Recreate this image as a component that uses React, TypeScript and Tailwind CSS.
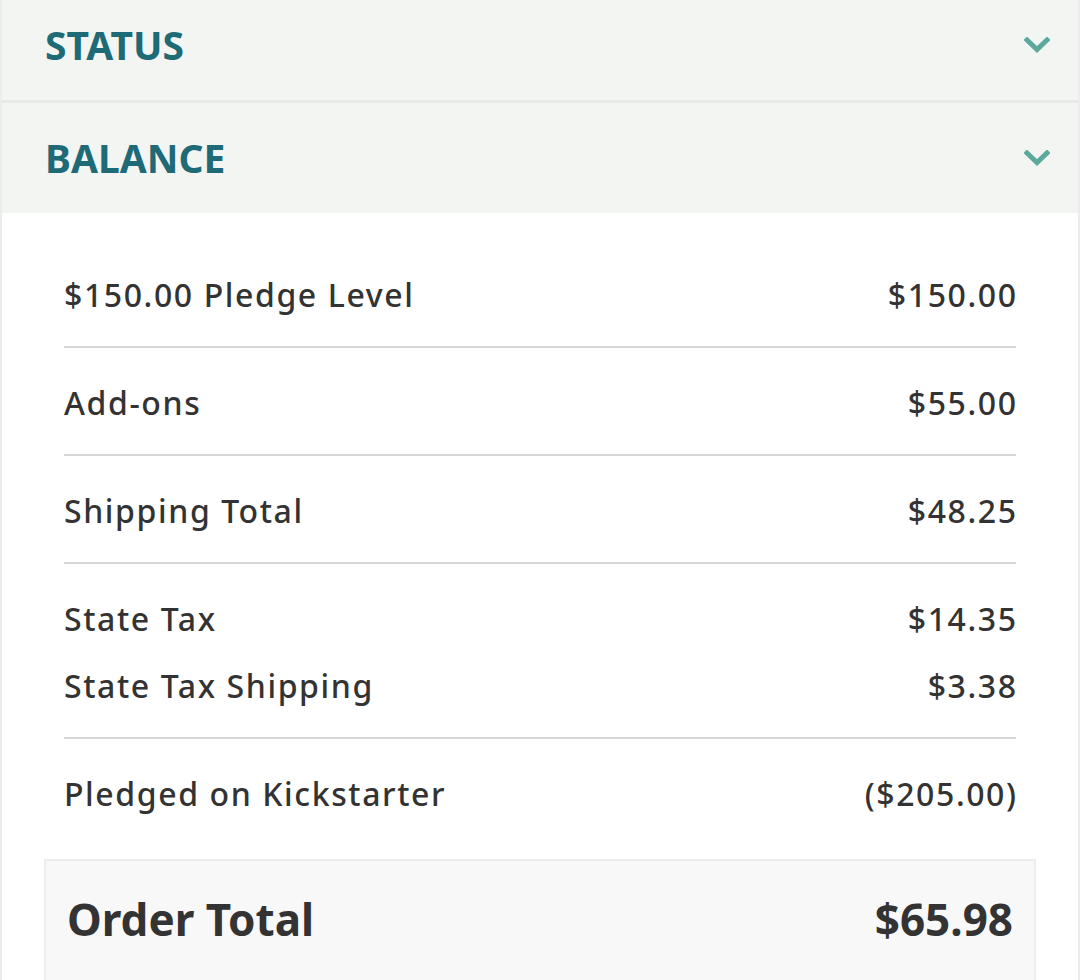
import { ReactNode } from 'react'

function Chevron() {
  return (
    <svg width="26" height="16" viewBox="0 0 26 16" fill="none">
      <path d="M3 3l10 9.5L23 3" stroke="#5aa99b" strokeWidth="5" strokeLinecap="square" />
    </svg>
  )
}

function Section({ title, className = '' }: { title: string; className?: string }) {
  return (
    <div className={`flex items-center justify-between bg-[#f3f5f3] pl-[43px] pr-[28px] ${className}`}>
      <span className="text-[39px] font-bold text-[#1e6a76]">{title}</span>
      <Chevron />
    </div>
  )
}

function Row({ label, value }: { label: string; value: string }) {
  return (
    <div className="flex h-[67px] items-center justify-between text-[32px] font-medium tracking-[1.6px] text-[#333]">
      <span>{label}</span>
      <span className="-mr-[1.6px]">{value}</span>
    </div>
  )
}

function Group({ children, last = false }: { children: ReactNode; last?: boolean }) {
  return (
    <div className={`pt-[21px] pb-[18px] ${last ? '' : 'border-b-2 border-[#d6d6d6]'}`}>{children}</div>
  )
}

export default function App() {
  return (
    <div
      className="h-[980px] overflow-hidden border-x-2 border-[#ececec] bg-white"
      style={{ fontFamily: '"Noto Sans", "Open Sans", sans-serif' }}
    >
      <div className="-mt-[10px]">
        <Section title="STATUS" className="h-[113px] border-b-[3px] border-[#e8eae8]" />
        <Section title="BALANCE" className="h-[110px]" />
      </div>
      <div className="px-[62px] pt-[27px]">
        <Group>
          <Row label="$150.00 Pledge Level" value="$150.00" />
        </Group>
        <Group>
          <Row label="Add-ons" value="$55.00" />
        </Group>
        <Group>
          <Row label="Shipping Total" value="$48.25" />
        </Group>
        <Group>
          <Row label="State Tax" value="$14.35" />
          <Row label="State Tax Shipping" value="$3.38" />
        </Group>
        <Group last>
          <Row label="Pledged on Kickstarter" value="($205.00)" />
        </Group>
      </div>
      <div className="mx-[42px] mt-[14px] border-2 border-[#ececec] bg-[#f8f8f8] px-[21px] pt-[28px] pb-[40px]">
        <div className="flex h-[60px] items-center justify-between text-[44px] font-bold text-[#333]">
          <span>Order Total</span>
          <span>$65.98</span>
        </div>
      </div>
    </div>
  )
}
